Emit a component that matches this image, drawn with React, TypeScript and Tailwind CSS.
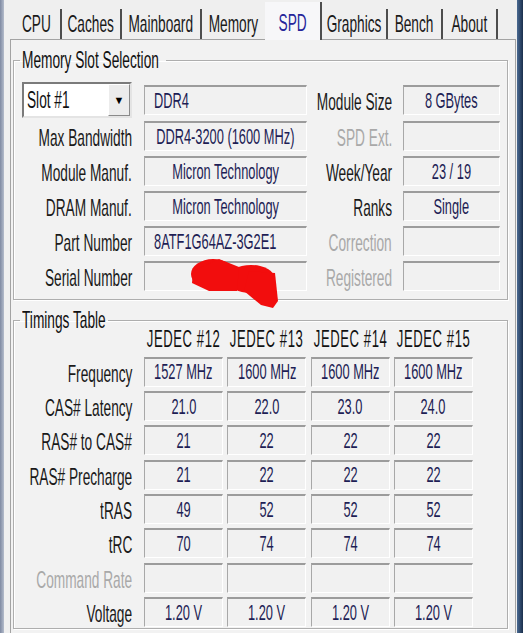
import React from "react";

const origins = { l: "origin-left", r: "origin-right", c: "origin-center" };

function T({ children, o = "c", className = "" }: { children: React.ReactNode; o?: "l" | "r" | "c"; className?: string }) {
    return (
        <span className={`inline-block shrink-0 whitespace-nowrap scale-x-[0.57] ${origins[o]} ${className}`}>
            {children}
        </span>
    );
}

function Field({
    children,
    w,
    align = "c",
    className = "",
    overlay,
}: {
    children?: React.ReactNode;
    w: string;
    align?: "l" | "c";
    className?: string;
    overlay?: React.ReactNode;
}) {
    return (
        <div
            className={`relative flex h-[30px] items-center border-t-2 border-l border-b border-r border-t-[#9c9c9c] border-l-[#a8a8a8] border-b-white border-r-white bg-[#f1f1f1] text-[22.5px] text-[#1e1e55] ${w} ${
                align === "l" ? "justify-start pl-[9px]" : "justify-center"
            } ${className}`}
        >
            {children ? <T o={align}>{children}</T> : null}
            {overlay}
        </div>
    );
}

function Label({ children, w, gray }: { children: React.ReactNode; w: string; gray?: boolean }) {
    return (
        <div className={`flex shrink-0 justify-end pt-[4px] text-[24px] ${gray ? "text-[#a9a9a9]" : "text-[#1a1a1a]"} ${w}`}>
            <T o="r">{children}</T>
        </div>
    );
}

function Group({ title, tw, children, className = "" }: { title: string; tw: string; children: React.ReactNode; className?: string }) {
    return (
        <fieldset className={`ml-[2px] mr-[7px] border border-[#aeaeae] shadow-[inset_1px_1px_0_#fff,1px_1px_0_#fff] ${className}`}>
            <legend className={`ml-[6px] px-[2px] text-[24px] leading-[24px] text-[#111] whitespace-nowrap ${tw}`}>
                <T o="l">{title}</T>
            </legend>
            {children}
        </fieldset>
    );
}

// red scribble that hides the serial number
function Blob() {
    return (
        <svg className="absolute left-[44px] top-[-6px] z-10 h-[52px] w-[92px] overflow-visible" viewBox="0 0 92 52">
            <g fill="#f20d0d">
                <ellipse cx="24" cy="17" rx="22" ry="15" />
                <ellipse cx="62" cy="22" rx="24" ry="14" />
                <path d="M60 14 L86 16 L89 44 L84 51 L72 48 L55 34 Z" />
                <path d="M4 14 L30 2 L50 10 L48 34 L20 34 L3 26 Z" />
            </g>
        </svg>
    );
}

const tabs: [string, string, boolean?][] = [
    ["CPU", "w-[50px]"],
    ["Caches", "w-[60px]"],
    ["Mainboard", "w-[80px]"],
    ["Memory", "w-[63px]"],
    ["SPD", "w-[57px]", true],
    ["Graphics", "w-[66px]"],
    ["Bench", "w-[55px]"],
    ["About", "w-[55px]"],
];

const slotRows: [string, string, "l" | "c", string, string, boolean?][] = [
    ["Max Bandwidth", "DDR4-3200 (1600 MHz)", "c", "SPD Ext.", "", true],
    ["Module Manuf.", "Micron Technology", "c", "Week/Year", "23 / 19"],
    ["DRAM Manuf.", "Micron Technology", "c", "Ranks", "Single"],
    ["Part Number", "8ATF1G64AZ-3G2E1", "l", "Correction", "", true],
    ["Serial Number", "", "c", "Registered", "", true],
];

const timings: [string, string[], boolean?][] = [
    ["Frequency", ["1527 MHz", "1600 MHz", "1600 MHz", "1600 MHz"]],
    ["CAS# Latency", ["21.0", "22.0", "23.0", "24.0"]],
    ["RAS# to CAS#", ["21", "22", "22", "22"]],
    ["RAS# Precharge", ["21", "22", "22", "22"]],
    ["tRAS", ["49", "52", "52", "52"]],
    ["tRC", ["70", "74", "74", "74"]],
    ["Command Rate", ["", "", "", ""], true],
    ["Voltage", ["1.20 V", "1.20 V", "1.20 V", "1.20 V"]],
];

export default function App() {
    return (
        <div className="flex h-[633px] w-[523px] overflow-hidden bg-[#efefef] font-['Liberation_Sans',Arial,sans-serif]">
            <div className="w-[4px] shrink-0 bg-gradient-to-r from-[#7f8aa2] to-[#b4bccb]" />
            <div className="flex flex-1 flex-col">
                {/* tabs */}
                <div className="flex h-[39px] items-end pl-[8px] text-[24px] text-[#1a1a1a]">
                    {tabs.map(([name, w, sel], i) => (
                        <div
                            key={name}
                            className={`flex shrink-0 justify-center ${w} ${
                                sel
                                    ? "relative z-10 -mb-px h-[38px] border-r-2 border-r-[#4d4d4d] bg-[#f7f7f9] pt-[3px] text-[#25259a]"
                                    : `h-[30px] items-start ${i === 3 ? "" : "border-r-2 border-r-[#4d4d4d]"}`
                            }`}
                        >
                            <T className={sel ? "" : "-mt-[3px]"}>{name}</T>
                        </div>
                    ))}
                </div>
                {/* panel */}
                <div className="ml-[6px] mr-[1px] flex flex-1 flex-col border-l border-r border-t border-[#a3a3a3] bg-[#f2f2f2] pt-[8px]">
                    <Group title="Memory Slot Selection" tw="w-[146px]" className="pb-[8px]">
                        <div className="flex flex-col gap-[5px] pt-[10px]">
                            <div className="-mb-[2px] flex h-[36px] items-center">
                                <div className="ml-[8px] flex h-[36px] w-[110px] shrink-0 items-stretch border-2 border-t-[#7b7b7b] border-l-[#7b7b7b] border-b-[#e4e4e4] border-r-[#e4e4e4] bg-white text-[24px] text-[#111]">
                                    <div className="flex flex-1 items-center pl-[3px]">
                                        <T o="l">Slot #1</T>
                                    </div>
                                    <div className="flex w-[22px] items-center justify-center border border-t-white border-l-white border-b-[#8a8a8a] border-r-[#8a8a8a] bg-[#ececec] text-[11px] text-black">
                                        ▼
                                    </div>
                                </div>
                                <Field w="ml-[12px] w-[163px]" align="l">
                                    DDR4
                                </Field>
                                <Label w="w-[85px]">Module Size</Label>
                                <Field w="ml-[11px] w-[97px]">8 GBytes</Field>
                            </div>
                            {slotRows.map(([l, v, a, r, rv, g]) => (
                                <div key={l} className="flex h-[30px] items-center">
                                    <Label w="w-[118px]">{l}</Label>
                                    <Field w="ml-[12px] w-[163px]" align={a} overlay={l === "Serial Number" ? <Blob /> : null}>
                                        {v}
                                    </Field>
                                    <Label w="w-[85px]" gray={g}>
                                        {r}
                                    </Label>
                                    <Field w="ml-[11px] w-[97px]">{rv}</Field>
                                </div>
                            ))}
                        </div>
                    </Group>
                    <Group title="Timings Table" tw="w-[88px]" className="mt-[8px] pb-[1px]">
                        <div className="flex h-[24px] items-end pl-[130px] text-[23px] tracking-[1px] text-[#111]">
                            {["JEDEC #12", "JEDEC #13", "JEDEC #14", "JEDEC #15"].map((h) => (
                                <div key={h} className="mr-[4.3px] flex w-[79px] justify-center">
                                    <T>{h}</T>
                                </div>
                            ))}
                        </div>
                        <div className="mt-[1px] flex flex-col gap-[5.4px]">
                            {timings.map(([l, vals, g]) => (
                                <div key={l} className="flex h-[29px] items-center">
                                    <Label w="w-[118px]" gray={g}>
                                        {l}
                                    </Label>
                                    <div className="ml-[12px] flex gap-[4.3px]">
                                        {vals.map((v, i) => (
                                            <Field key={i} w="w-[79px] h-[29px]">
                                                {v}
                                            </Field>
                                        ))}
                                    </div>
                                </div>
                            ))}
                        </div>
                    </Group>
                </div>
            </div>
            <div className="w-[6px] shrink-0 bg-gradient-to-r from-[#4a6a92] to-[#1b2f4c]" />
        </div>
    );
}
